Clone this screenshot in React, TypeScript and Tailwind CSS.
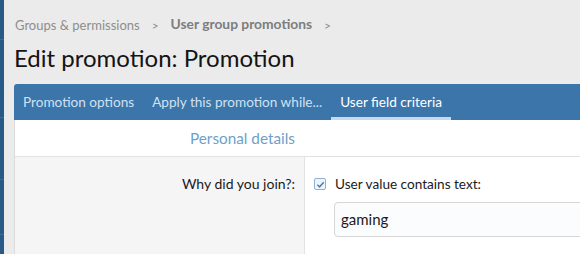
import React from 'react';

const TABS = [
  { label: 'Promotion options', active: false },
  { label: 'Apply this promotion while...', active: false },
  { label: 'User field criteria', active: true },
];

const font = "font-['Segoe_UI','Lato',sans-serif]";

export default function App() {
  return (
    <div className={`flex h-[254px] w-[580px] overflow-hidden bg-[#ebebeb] ${font}`}>
      {/* sidebar edge */}
      <div className="flex w-[4px] shrink-0 flex-col bg-[#285a87]">
        <div className="h-[40px] border-b border-[#3a6c98]" />
        <div className="h-[78px] border-b border-[#3a6c98]" />
        <div className="h-[62px] border-b border-[#3a6c98]" />
        <div className="h-[55px] border-b border-[#3a6c98]" />
      </div>

      <div className="flex min-w-0 flex-1 flex-col pl-[10px]">
        <div className="flex h-[38px] items-end gap-[12px] pb-[3px] pl-[1px] text-[13px] text-[#8d8d8d]">
          <span>Groups &amp; permissions</span>
          <span className="text-[12px]">&gt;</span>
          <span className="text-[13.8px] font-bold text-[#7d7d7d]">User group promotions</span>
          <span className="text-[12px]">&gt;</span>
        </div>

        <h1 className="mt-[2px] h-[44px] text-[24px] leading-[36px] text-[#141414]">
          Edit promotion: Promotion
        </h1>

        <div className="-mr-[20px] flex h-[36px] items-stretch rounded-tl-[3px] bg-[#3b75aa]">
          {TABS.map((t) => (
            <div
              key={t.label}
              className={`flex items-center border-b-[3px] px-[9px] pt-[3px] text-[13.6px] ${
                t.active
                  ? 'border-[#c6daeb] text-white'
                  : 'border-transparent text-[#cfe2f3]'
              }`}
            >
              {t.label}
            </div>
          ))}
        </div>

        <div className="-mr-[20px] flex flex-1 flex-col border-l border-[#dcdcdc] bg-white">
          <div className="flex h-[37px] items-center border-b border-[#e2e2e2] pl-[175px] text-[15.3px] text-[#6d9fca]">
            Personal details
          </div>
          <div className="flex flex-1">
            <div className="flex w-[290px] shrink-0 justify-end border-r border-[#e2e2e2] bg-[#f5f5f5] pr-[9px] pt-[17px]">
              <span className="text-[14px] leading-[20px] text-[#1a1a1a]">Why did you join?:</span>
            </div>
            <div className="flex flex-1 flex-col pl-[9px] pt-[17px]">
              <div className="flex items-center gap-[9px] text-[13.6px] leading-[20px] text-[#1a1a1a]">
                <span className="flex h-[12px] w-[12px] items-center justify-center rounded-[2px] border border-[#8db1d5] bg-[#eef4fa]">
                  <svg width="9" height="9" viewBox="0 0 10 10" fill="none">
                    <path d="M1.5 5.2 L4 7.6 L8.6 2.4" stroke="#4a7fb5" strokeWidth="1.6" />
                  </svg>
                </span>
                <span>User value contains text:</span>
              </div>
              <div className="ml-[20px] mt-[8px] flex h-[35px] items-center rounded-[4px] border border-[#d6d6d6] bg-[#fbfcfd] pl-[6px] text-[15px] text-[#1a1a1a]">
                gaming
              </div>
            </div>
          </div>
        </div>
      </div>
    </div>
  );
}
